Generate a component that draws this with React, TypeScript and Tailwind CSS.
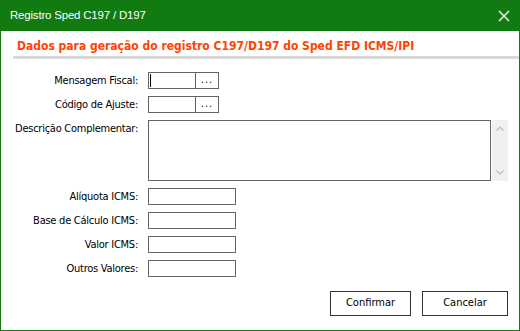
import React from "react";

const font = { fontFamily: '"DejaVu Sans Condensed", "DejaVu Sans", Tahoma, sans-serif' };

function Label({ children, className = "" }: { children: React.ReactNode; className?: string }) {
    return (
        <div className={`w-[137px] text-right text-[11px] tracking-[-0.25px] text-black leading-[17px] ${className}`}>
            {children}
        </div>
    );
}

function LookupField({ cursor }: { cursor?: boolean }) {
    return (
        <div className="flex h-[17px] w-[71px] border border-[#646464] bg-white">
            <div className="flex-1 relative">
                {cursor && <span className="absolute left-[1px] top-[1px] h-[13px] w-px bg-black" />}
            </div>
            <div className="w-[23px] border-l border-[#646464] flex items-end justify-center pb-[3px]">
                <span className="text-[11px] leading-none tracking-[1px] text-black">...</span>
            </div>
        </div>
    );
}

function ValueField() {
    return <div className="h-[17px] w-[88px] border border-[#646464] bg-white" />;
}

export default function App() {
    return (
        <div className="w-[520px] h-[331px] flex flex-col bg-white select-none" style={font}>
            {/* Title bar */}
            <div className="h-[31px] bg-[#117a11] flex items-center justify-between pl-[10px] pr-[9px]">
                <span
                    className="text-white text-[11.5px] tracking-[-0.2px]"
                    style={{ fontFamily: '"Liberation Sans", Arial, sans-serif' }}
                >
                    Registro Sped C197 / D197
                </span>
                <svg width="12" height="12" viewBox="0 0 12 12" className="mr-[1px]">
                    <path d="M1 1 L11 11 M11 1 L1 11" stroke="white" strokeWidth="1.3" />
                </svg>
            </div>

            <div className="flex-1 border-x border-b border-[#117a11] flex flex-col">
                {/* Header */}
                <div className="pt-[8px] pl-[16px] text-[12px] font-bold text-[#ff4400] leading-[14px]">
                    Dados para geração do registro C197/D197 do Sped EFD ICMS/IPI
                </div>
                <div className="ml-[12px] mt-[3px] h-[3px] bg-[#d9d9d9]" />

                {/* Form */}
                <div className="mt-[13px] flex flex-col gap-[7px]">
                    <div className="flex gap-[10px]">
                        <Label>Mensagem Fiscal:</Label>
                        <LookupField cursor />
                    </div>
                    <div className="flex gap-[10px]">
                        <Label>Código de Ajuste:</Label>
                        <LookupField />
                    </div>
                    <div className="flex gap-[10px]">
                        <Label>Descrição Complementar:</Label>
                        <div className="flex">
                            <div className="h-[61px] w-[343px] border border-[#646464] bg-white" />
                            <div className="ml-[1px] w-[16px] h-[61px] bg-[#f0f0f0] flex flex-col items-center justify-between py-[6px]">
                                <svg width="8" height="5" viewBox="0 0 8 5">
                                    <path d="M0.5 4.5 L4 1 L7.5 4.5" stroke="#bdbdbd" strokeWidth="1.2" fill="none" />
                                </svg>
                                <svg width="8" height="5" viewBox="0 0 8 5">
                                    <path d="M0.5 0.5 L4 4 L7.5 0.5" stroke="#bdbdbd" strokeWidth="1.2" fill="none" />
                                </svg>
                            </div>
                        </div>
                    </div>
                </div>

                <div className="mt-[7px] flex flex-col gap-[7px]">
                    {["Alíquota ICMS:", "Base de Cálculo ICMS:", "Valor ICMS:", "Outros Valores:"].map((l) => (
                        <div key={l} className="flex gap-[10px]">
                            <Label>{l}</Label>
                            <ValueField />
                        </div>
                    ))}
                </div>

                {/* Buttons */}
                <div className="mt-auto mb-[14px] flex justify-end gap-[11px] pr-[11px]">
                    <button className="h-[25px] w-[81px] border border-[#333333] bg-white text-[11px] text-black">
                        Confirmar
                    </button>
                    <button className="h-[25px] w-[86px] border border-[#333333] bg-white text-[11px] text-black">
                        Cancelar
                    </button>
                </div>
            </div>
        </div>
    );
}
